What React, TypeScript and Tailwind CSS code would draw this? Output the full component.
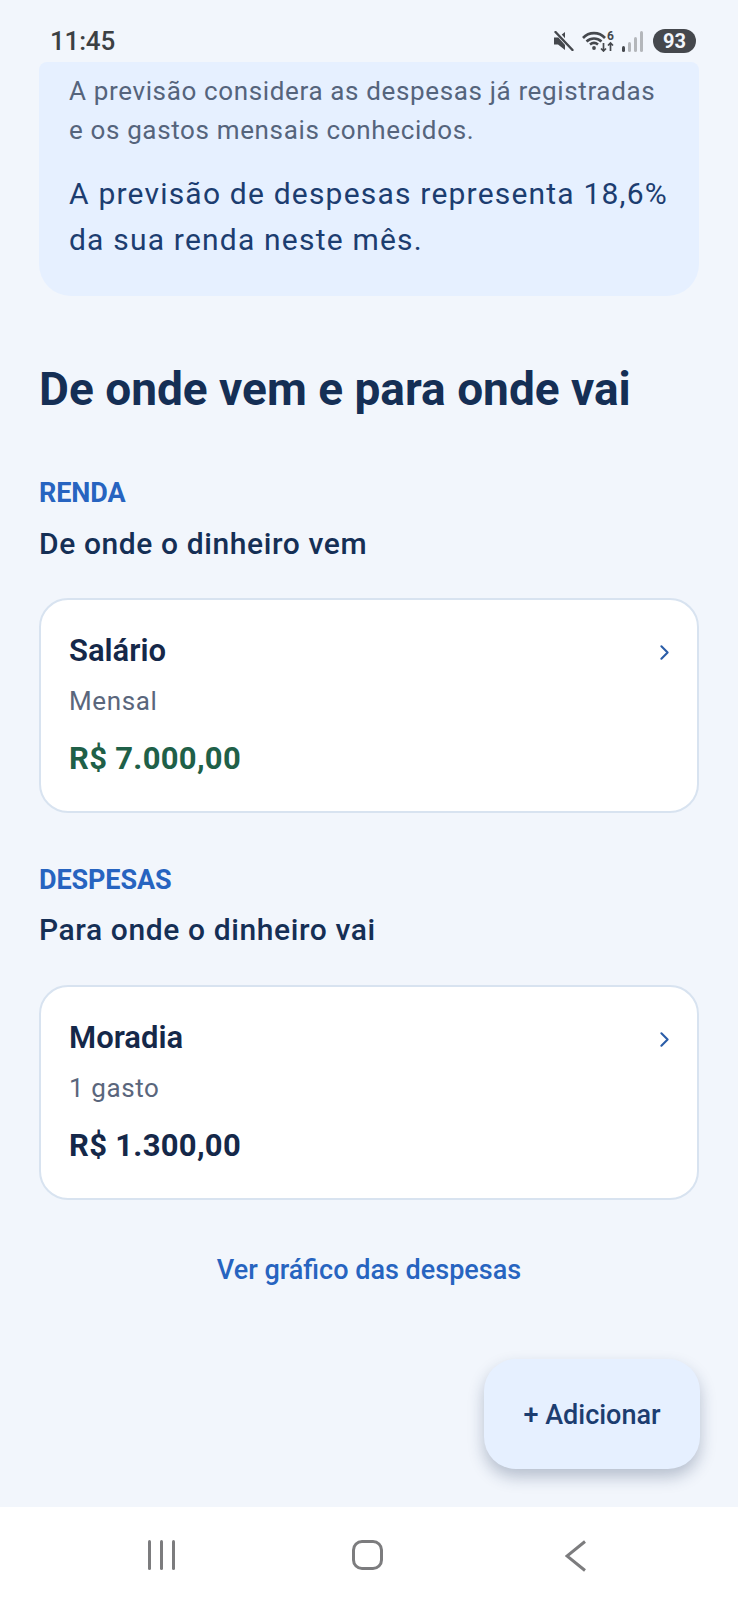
import { ChevronRight } from 'lucide-react';

function StatusBar() {
  return (
    <div className="flex h-[62px] items-center justify-between pl-[50px] pr-[42px] pt-[20px]">
      <span className="text-[26px] font-medium tracking-[-0.2px] text-[#3c4043]">11:45</span>
      <div className="flex items-center">
        <svg width="21" height="20" viewBox="0 0 21 20" className="mr-[8px]">
          <path d="M1 6.5h4L12 1v18l-7-5.500H1z" fill="#45484d" />
          <path d="M3 0.500l17 19" stroke="#f2f6fc" strokeWidth="4.500" />
          <path d="M2.500 1l17 18" stroke="#45484d" strokeWidth="2.400" strokeLinecap="round" />
        </svg>
        <svg width="33" height="22" viewBox="0 0 33 22" className="mr-[7px]">
          <path d="M1 8C7 1.500 17 1.500 23 8M4.500 11.500c4.500-4 10.500-4 15 0M8 14.500c2.500-2 5.500-2 8 0" fill="none" stroke="#45484d" strokeWidth="2.600" />
          <circle cx="12" cy="18" r="1.900" fill="#45484d" />
          <path d="M21.500 13v8m-2.500-2.500 2.500 2.500 2.500-2.500M28.500 21v-8M26 15.500l2.500-2.500 2.500 2.500" fill="none" stroke="#45484d" strokeWidth="1.700" />
          <text x="25" y="9.500" fontSize="12" fontWeight="700" fill="#45484d" fontFamily="Roboto, sans-serif">6</text>
        </svg>
        <div className="mr-[10px] flex items-end gap-[3px]">
          <div className="h-[6px] w-[3px] rounded-sm bg-[#45484d]" />
          <div className="h-[10px] w-[3px] rounded-sm bg-[#b4b7bb]" />
          <div className="h-[15px] w-[3px] rounded-sm bg-[#b4b7bb]" />
          <div className="h-[21px] w-[3px] rounded-sm bg-[#b4b7bb]" />
        </div>
        <div className="flex h-[24px] w-[43px] items-center justify-center rounded-full bg-[#45484d] text-[20px] font-bold text-[#f2f6fc]">
          93
        </div>
      </div>
    </div>
  );
}

function ItemCard({ title, sub, value, valueClass }: { title: string; sub: string; value: string; valueClass: string }) {
  return (
    <div className="rounded-[29px] border-2 border-[#d8e3f0] bg-white pl-[28px] pr-[20px] pt-[29px] pb-[30px]">
      <div className="flex items-center justify-between">
        <span className="text-[31px] leading-[44px] font-semibold text-[#152849]">{title}</span>
        <ChevronRight className="mt-[3px] h-[25px] w-[25px] text-[#2a5da8]" strokeWidth={2} />
      </div>
      <p className="mt-[10px] text-[26px] leading-[36px] tracking-[0.6px] text-[#5a667c]">{sub}</p>
      <p className={`mt-[18px] text-[31px] leading-[44px] font-bold tracking-[0.3px] ${valueClass}`}>{value}</p>
    </div>
  );
}

export default function App() {
  return (
    <div className="relative h-[1600px] w-[738px] overflow-hidden bg-[#f2f6fc] font-['Roboto',sans-serif]">
      <StatusBar />

      <div className="mx-[39px] rounded-b-[32px] rounded-t-[8px] bg-[#e6f0ff] px-[30px] pb-[33px] pt-[10px]">
        <p className="text-[26px] leading-[39px] tracking-[0.64px] text-[#55647c]">
          A previsão considera as despesas já registradas e os gastos mensais conhecidos.
        </p>
        <p className="mt-[21px] text-[30px] leading-[46px] tracking-[1.2px] text-[#1c3d70]">
          A previsão de despesas representa 18,6% da sua renda neste mês.
        </p>
      </div>

      <div className="px-[39px]">
        <h1 className="mt-[63px] text-[46px] leading-[60px] font-bold text-[#152f55]">De onde vem e para onde vai</h1>

        <h2 className="mt-[56px] text-[27px] leading-[36px] font-bold tracking-[-0.1px] text-[#2764c0]">RENDA</h2>
        <p className="mt-[13px] text-[30px] leading-[40px] font-medium tracking-[0.6px] text-[#152f55]">De onde o dinheiro vem</p>
        <div className="mt-[34px]">
          <ItemCard title="Salário" sub="Mensal" value="R$ 7.000,00" valueClass="text-[#1f6048]" />
        </div>

        <h2 className="mt-[49px] text-[27px] leading-[36px] font-bold tracking-[-0.1px] text-[#2764c0]">DESPESAS</h2>
        <p className="mt-[12px] text-[30px] leading-[40px] font-medium tracking-[0.6px] text-[#152f55]">Para onde o dinheiro vai</p>
        <div className="mt-[35px]">
          <ItemCard title="Moradia" sub="1 gasto" value="R$ 1.300,00" valueClass="text-[#152849]" />
        </div>

        <p className="mt-[50px] text-center text-[27px] leading-[40px] font-medium text-[#2764c0]">Ver gráfico das despesas</p>
      </div>

      <button className="absolute left-[484px] top-[1359px] flex h-[110px] w-[216px] items-center justify-center rounded-[32px] bg-[#e6f0ff] pt-[3px] text-[27px] font-medium text-[#1c3d70] shadow-[0_8px_16px_rgba(30,50,90,0.28)]">
        + Adicionar
      </button>

      <div className="absolute bottom-0 left-0 right-0 flex h-[93px] items-start bg-white pt-[33px]">
        <div className="ml-[148px] flex h-[30px] gap-[9px]">
          <div className="h-full w-[3px] rounded-full bg-[#7c7c7e]" />
          <div className="h-full w-[3px] rounded-full bg-[#7c7c7e]" />
          <div className="h-full w-[3px] rounded-full bg-[#7c7c7e]" />
        </div>
        <div className="ml-[177px] h-[30px] w-[31px] rounded-[10px] border-[3px] border-[#7c7c7e]" />
        <svg width="22" height="32" viewBox="0 0 22 32" className="ml-[182px]">
          <path d="M20 1.500 2 16l18 14.500" fill="none" stroke="#7c7c7e" strokeWidth="3" />
        </svg>
      </div>
    </div>
  );
}
